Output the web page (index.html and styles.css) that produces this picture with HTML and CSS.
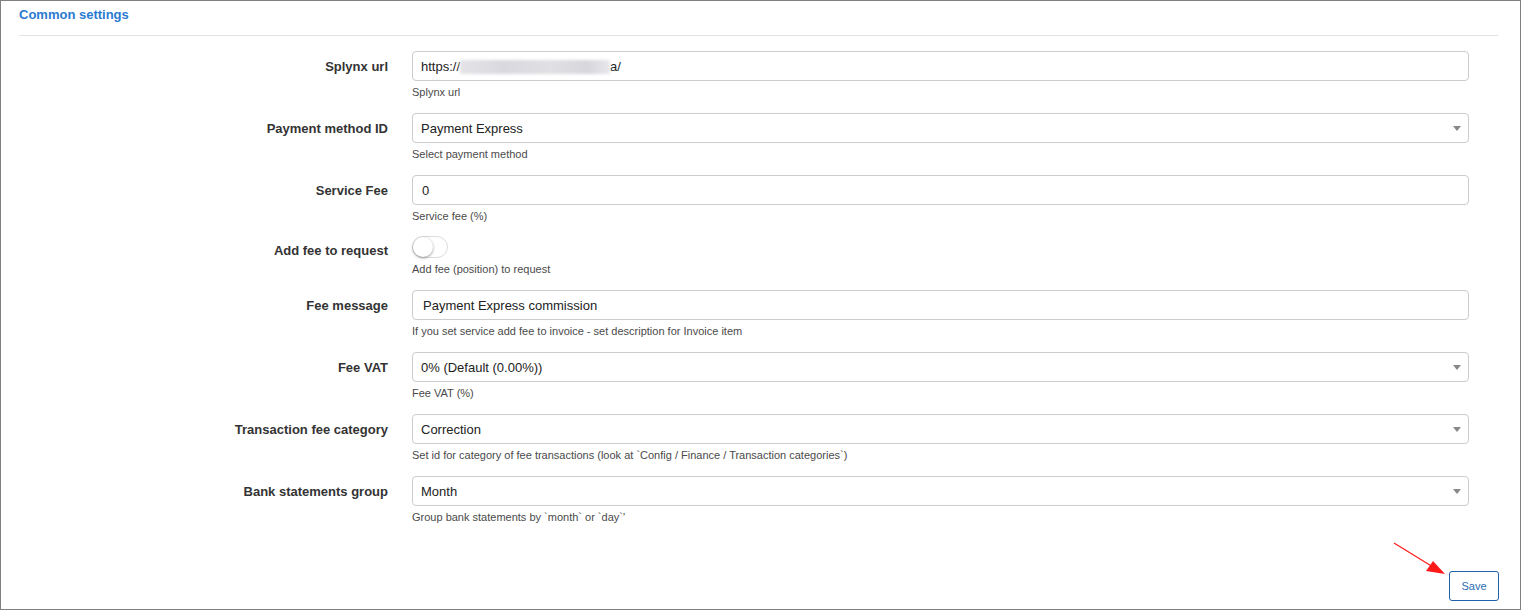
FILE: index.html
```html
<!DOCTYPE html>
<html lang="en">
<head>
<meta charset="utf-8">
<title>Common settings</title>
<link rel="stylesheet" href="styles.css">
</head>
<body>
<div class="frame">
  <div class="panel-heading">
    <h3 class="panel-title">Common settings</h3>
  </div>
  <form class="form">
    <div class="row">
      <label class="label">Splynx url</label>
      <div class="field">
        <div class="input">https://<span class="blur"></span>a/</div>
        <div class="help">Splynx url</div>
      </div>
    </div>
    <div class="row">
      <label class="label">Payment method ID</label>
      <div class="field">
        <div class="input select">Payment Express<span class="caret"></span></div>
        <div class="help">Select payment method</div>
      </div>
    </div>
    <div class="row">
      <label class="label">Service Fee</label>
      <div class="field">
        <div class="input text">0</div>
        <div class="help">Service fee (%)</div>
      </div>
    </div>
    <div class="row row-toggle">
      <label class="label label-toggle">Add fee to request</label>
      <div class="field">
        <div class="toggle"><span class="knob"></span></div>
        <div class="help">Add fee (position) to request</div>
      </div>
    </div>
    <div class="row">
      <label class="label">Fee message</label>
      <div class="field">
        <div class="input text wide">Payment Express commission</div>
        <div class="help">If you set service add fee to invoice - set description for Invoice item</div>
      </div>
    </div>
    <div class="row">
      <label class="label">Fee VAT</label>
      <div class="field">
        <div class="input select">0% (Default (0.00%))<span class="caret"></span></div>
        <div class="help">Fee VAT (%)</div>
      </div>
    </div>
    <div class="row">
      <label class="label">Transaction fee category</label>
      <div class="field">
        <div class="input select">Correction<span class="caret"></span></div>
        <div class="help">Set id for category of fee transactions (look at `Config / Finance / Transaction categories`)</div>
      </div>
    </div>
    <div class="row">
      <label class="label">Bank statements group</label>
      <div class="field">
        <div class="input select">Month<span class="caret"></span></div>
        <div class="help">Group bank statements by `month` or `day`'</div>
      </div>
    </div>
    <div class="actions">
      <button type="button" class="btn-save">Save</button>
    </div>
  </form>
  <svg class="annotation" width="60" height="40" viewBox="0 0 60 40">
    <line x1="1" y1="1" x2="40" y2="25" stroke="#ff1a1a" stroke-width="1.2"/>
    <polygon points="52,32 33,29 40,19" fill="#ff1a1a"/>
  </svg>
</div>
</body>
</html>
```

FILE: styles.css
```css
* { box-sizing: border-box; }
html, body { margin: 0; padding: 0; background: #fff; }
body {
  font-family: "Liberation Sans", Arial, sans-serif;
  color: #333;
}
.frame {
  position: relative;
  width: 1521px;
  height: 610px;
  border: 1px solid #808080;
  background: #fff;
}
.panel-heading {
  margin: 0 22px 0 18px;
  padding: 4px 0 10px;
  border-bottom: 1px solid #e2e2e2;
}
.panel-title {
  margin: 0;
  font-size: 13px;
  line-height: 20px;
  font-weight: bold;
  color: #2a7ad2;
}
.form {
  margin: 0 21px 0 18px;
  padding-top: 15px;
}
.row {
  display: grid;
  grid-template-columns: 369px 1057px;
  column-gap: 24px;
  margin-bottom: 14px;
}
.label {
  text-align: right;
  font-size: 13px;
  font-weight: bold;
  line-height: 30px;
  padding-top: 1px;
  color: #333;
}
.label-toggle { line-height: 26px; }
.input {
  position: relative;
  height: 30px;
  border: 1px solid #ccc;
  border-radius: 4px;
  padding: 1px 8px 0;
  font-size: 13px;
  line-height: 28px;
  color: #222;
  white-space: nowrap;
}
.input.text { padding-left: 9px; }
.input.wide { padding-left: 10px; }
.blur {
  display: inline-block;
  width: 150px;
  height: 14px;
  vertical-align: -3px;
  background: linear-gradient(90deg, #e4e4e8, #d8d8de 30%, #e0e0e4 60%, #d6d6dc 85%, #e8e8ec);
  filter: blur(1.5px);
}
.caret {
  position: absolute;
  right: 7px;
  top: 12px;
  width: 0;
  height: 0;
  border-left: 4px solid transparent;
  border-right: 4px solid transparent;
  border-top: 5px solid #888;
}
.help {
  margin-top: 5px;
  font-size: 11px;
  line-height: 13px;
  color: #4a4a4a;
}
.toggle {
  position: relative;
  width: 36px;
  height: 22px;
  margin-top: -1px;
  border: 1px solid #dcdcdc;
  border-radius: 11px;
  background: #fff;
}
.knob {
  position: absolute;
  left: 0;
  top: 0;
  width: 20px;
  height: 20px;
  border-radius: 50%;
  background: #fff;
  box-shadow: 0 1px 3px rgba(0, 0, 0, 0.4);
}
.actions {
  display: flex;
  justify-content: flex-end;
  padding-top: 33px;
}
.btn-save {
  width: 50px;
  height: 30px;
  border: 1px solid #1f5fa8;
  border-radius: 3px;
  background: #fff;
  color: #2a6bb3;
  font-family: "Liberation Sans", Arial, sans-serif;
  font-size: 11px;
  padding: 0;
}
.annotation {
  position: absolute;
  left: 1392px;
  top: 541px;
}
```
